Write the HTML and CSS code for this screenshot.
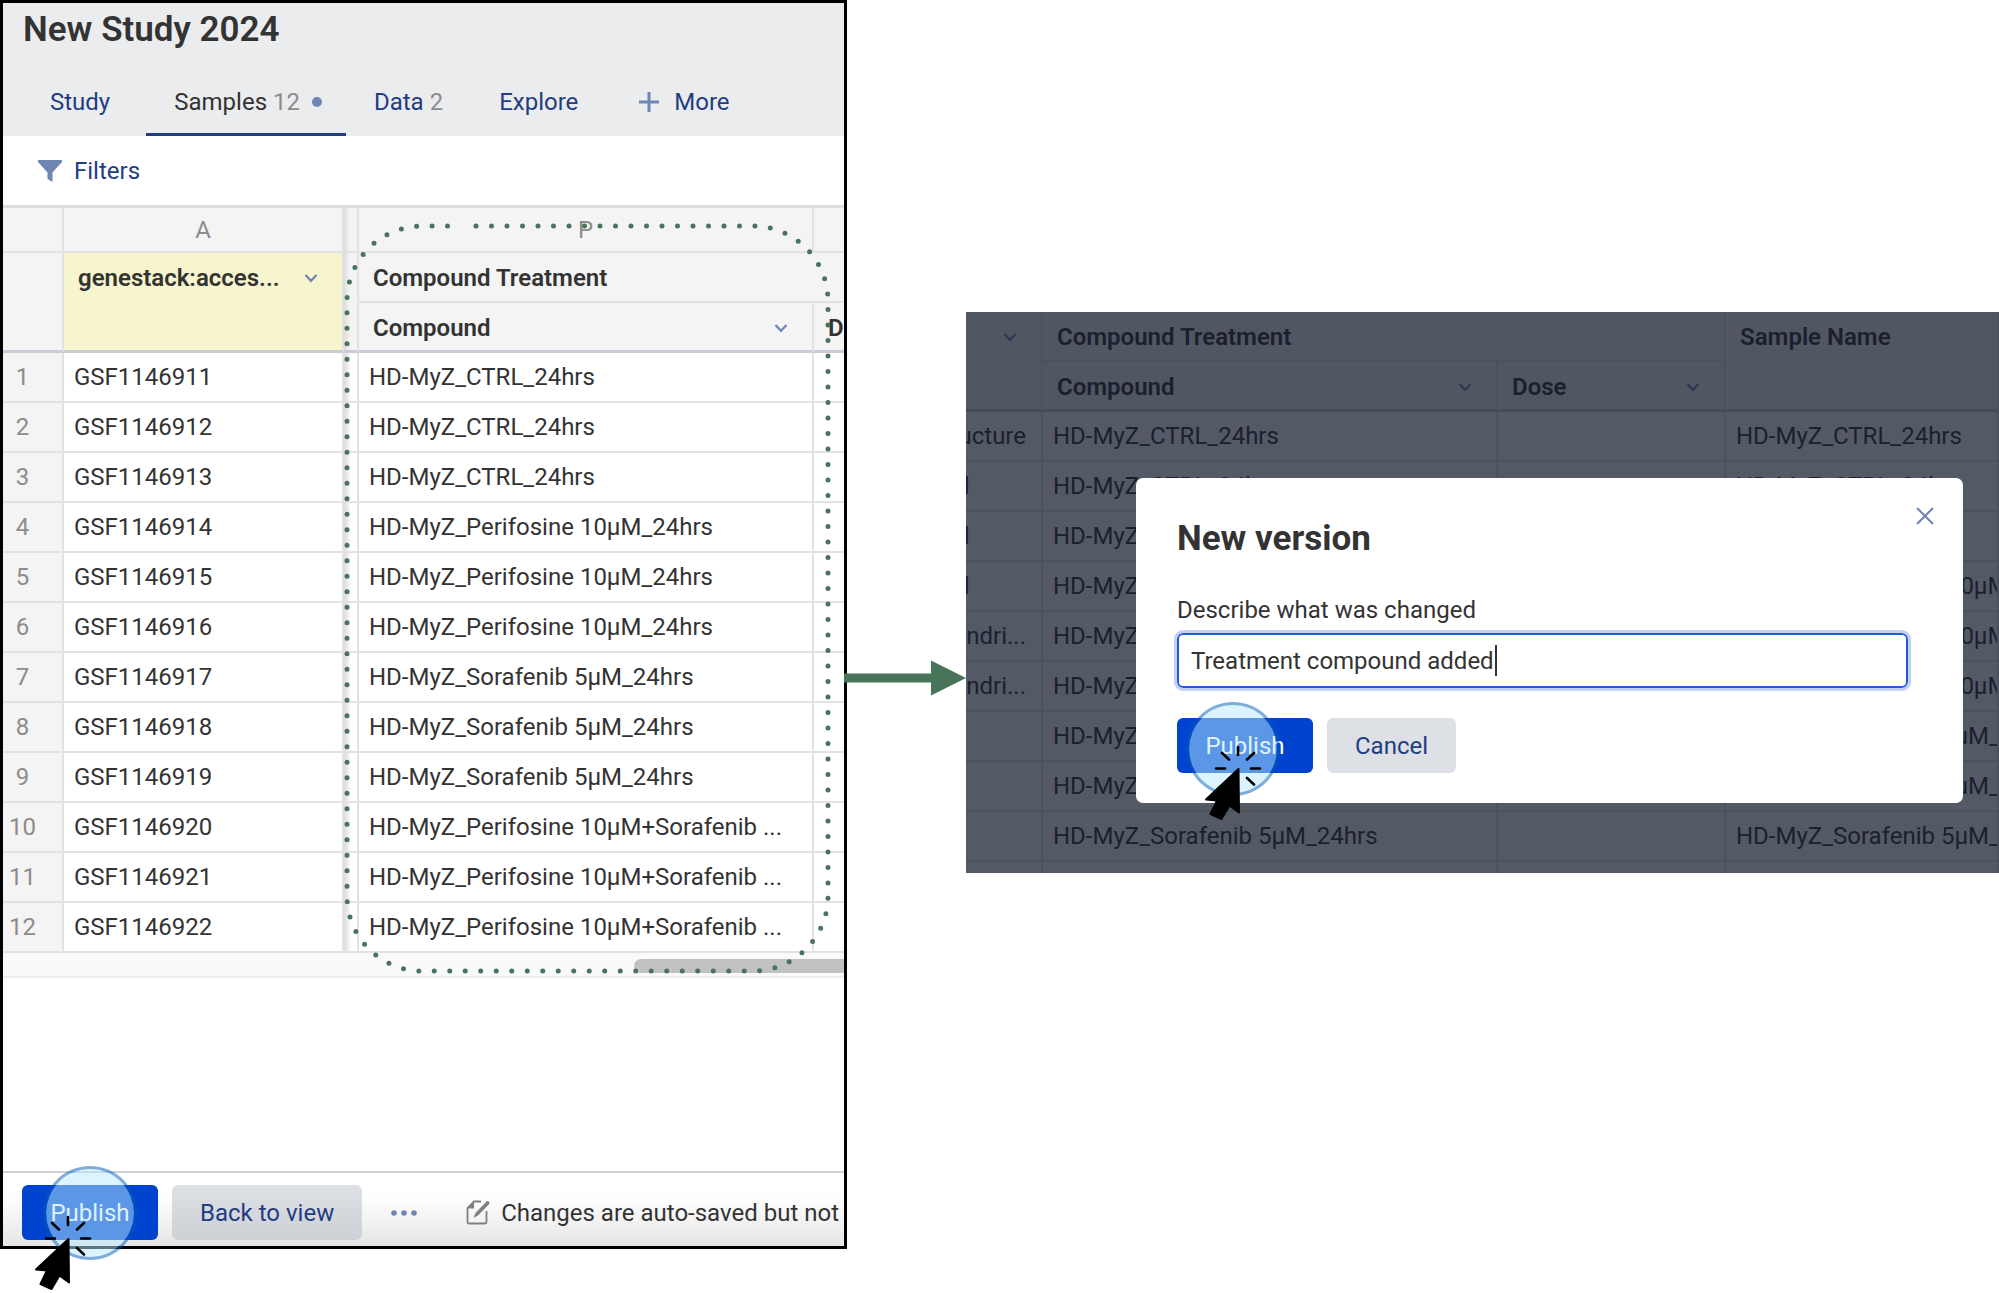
FILE: index.html
```
<!DOCTYPE html>
<html lang="en">

<head>
    <meta charset="UTF-8">
    <meta name="viewport" content="width=device-width, initial-scale=1.0">
    <title>New Study 2024</title>
    <link rel="stylesheet" href="styles.css">
</head>

<body>
    <svg class="defs" aria-hidden="true">
        <symbol id="chevron" viewBox="0 0 14 10">
            <path d="M1.5 2 L7 7.8 L12.500 2" fill="none" stroke="currentColor" stroke-width="2.200" />
        </symbol>
        <symbol id="pointer" viewBox="0 0 64 80">
            <g stroke="#000" stroke-width="2.600" stroke-linecap="round">
                <path d="M36 3 V11 M20 9 L27 15.500 M52 9 L45 15.500 M14 24.500 H23 M49 24.500 H58 M45 34 L52 40.500" />
            </g>
            <path d="M36.500 25 L37 68.500 L27.500 61.500 L19.500 75 L8.500 70 L15 56.500 L4 55.500 Z" stroke="#000" stroke-width="2" stroke-linejoin="round" />
        </symbol>
    </svg>

    <main class="wrapper">
        <section class="study">
            <header class="study-header">
                <h1>New Study 2024</h1>
                <nav class="tabs">
                    <a href="#">Study</a>
                    <a href="#" class="active">Samples <span class="count">12</span><i class="dot"></i></a>
                    <a href="#">Data <span class="count">2</span></a>
                    <a href="#">Explore</a>
                    <a href="#"><svg class="plus" viewBox="0 0 20 20"><path d="M10 0 V20 M0 10 H20" stroke="#6f86b5" stroke-width="3" /></svg>More</a>
                </nav>
            </header>

            <div class="toolbar">
                <button type="button" class="filters">
                    <svg viewBox="0 0 24 22"><path d="M0 0 H24 V2 L14.500 12.500 V22 L9.500 19 V12.500 L0 2 Z" fill="#6f86b5" /></svg>
                    Filters
                </button>
            </div>

            <div class="sheet">
                <div class="clip">
                    <table class="grid samples">
                        <colgroup>
                            <col class="c-num">
                            <col class="c-acc">
                            <col class="c-gap">
                            <col class="c-comp">
                            <col class="c-dose">
                        </colgroup>
                        <thead>
                            <tr class="letters">
                                <th></th>
                                <th>A</th>
                                <th class="gap"></th>
                                <th>P</th>
                                <th></th>
                            </tr>
                            <tr>
                                <th rowspan="2" class="last"></th>
                                <th rowspan="2" class="last key">
                                    <div class="head">genestack:acces... <button type="button" aria-label="Accession menu"><svg><use href="#chevron" /></svg></button></div>
                                </th>
                                <th rowspan="2" class="last gap"></th>
                                <th colspan="2"><div class="head">Compound Treatment</div></th>
                            </tr>
                            <tr>
                                <th class="last"><div class="head">Compound <button type="button" aria-label="Compound menu"><svg><use href="#chevron" /></svg></button></div></th>
                                <th class="last"><div class="head">Dose</div></th>
                            </tr>
                        </thead>
                        <tbody>
                            <tr><th>1</th><td>GSF1146911</td><td class="gap"></td><td>HD-MyZ_CTRL_24hrs</td><td></td></tr>
                            <tr><th>2</th><td>GSF1146912</td><td class="gap"></td><td>HD-MyZ_CTRL_24hrs</td><td></td></tr>
                            <tr><th>3</th><td>GSF1146913</td><td class="gap"></td><td>HD-MyZ_CTRL_24hrs</td><td></td></tr>
                            <tr><th>4</th><td>GSF1146914</td><td class="gap"></td><td>HD-MyZ_Perifosine 10µM_24hrs</td><td></td></tr>
                            <tr><th>5</th><td>GSF1146915</td><td class="gap"></td><td>HD-MyZ_Perifosine 10µM_24hrs</td><td></td></tr>
                            <tr><th>6</th><td>GSF1146916</td><td class="gap"></td><td>HD-MyZ_Perifosine 10µM_24hrs</td><td></td></tr>
                            <tr><th>7</th><td>GSF1146917</td><td class="gap"></td><td>HD-MyZ_Sorafenib 5µM_24hrs</td><td></td></tr>
                            <tr><th>8</th><td>GSF1146918</td><td class="gap"></td><td>HD-MyZ_Sorafenib 5µM_24hrs</td><td></td></tr>
                            <tr><th>9</th><td>GSF1146919</td><td class="gap"></td><td>HD-MyZ_Sorafenib 5µM_24hrs</td><td></td></tr>
                            <tr><th>10</th><td>GSF1146920</td><td class="gap"></td><td>HD-MyZ_Perifosine 10µM+Sorafenib ...</td><td></td></tr>
                            <tr><th>11</th><td>GSF1146921</td><td class="gap"></td><td>HD-MyZ_Perifosine 10µM+Sorafenib ...</td><td></td></tr>
                            <tr><th>12</th><td>GSF1146922</td><td class="gap"></td><td>HD-MyZ_Perifosine 10µM+Sorafenib ...</td><td></td></tr>
                        </tbody>
                    </table>
                    <div class="scrollbar"><div class="thumb"></div></div>
                </div>
                <!-- dotted outline round the compound column -->
                <svg class="outline" viewBox="0 0 490 754">
                    <path d="M133 4 H410 A75 75 0 0 1 485 79 V674 A75 75 0 0 1 410 749 H79 A75 75 0 0 1 4 674 V79 A75 75 0 0 1 79 4 H109" />
                </svg>
            </div>

            <footer class="actions">
                <div class="click click-page">
                    <button type="button" class="btn primary">Publish</button>
                    <span class="halo"></span>
                    <svg class="pointer"><use href="#pointer" /></svg>
                </div>
                <button type="button" class="btn">Back to view</button>
                <button type="button" class="more" aria-label="More actions">
                    <svg viewBox="0 0 26 6" fill="#6f86b5"><circle cx="3" cy="3" r="2.800" /><circle cx="13" cy="3" r="2.800" /><circle cx="23" cy="3" r="2.800" /></svg>
                </button>
                <svg class="note" viewBox="0 0 24 25">
                    <path d="M15 1.500 H8 L1.500 8 V21.500 Q1.500 23.500 3.500 23.500 H18.500 Q20.500 23.500 20.500 21.500 V11" fill="none" stroke="#808080" stroke-width="1.800" />
                    <path d="M8 1 V8.500 H1 Z M20.500 1.500 Q22 0.500 23.200 2 Q24 3.300 23 4.300 L12 15.500 L7.500 18 L9.500 13 Z" fill="#808080" />
                </svg>
                <p>Changes are auto-saved but not published</p>
            </footer>
        </section>

        <svg class="arrow" viewBox="0 0 124 36" preserveAspectRatio="xMaxYMid meet">
            <path d="M0 13.500 H89 V0.500 L124 18 L89 35.500 V22.500 H0 Z" fill="#48745a" />
        </svg>

        <section class="preview">
            <table class="grid">
                <colgroup>
                    <col class="c-cut">
                    <col class="c-comp">
                    <col class="c-dose">
                    <col>
                </colgroup>
                <thead>
                    <tr>
                        <th rowspan="2" class="last"><div class="head"><span></span><button type="button" aria-label="Column menu"><svg><use href="#chevron" /></svg></button></div></th>
                        <th colspan="2"><div class="head">Compound Treatment</div></th>
                        <th rowspan="2" class="last"><div class="head">Sample Name</div></th>
                    </tr>
                    <tr>
                        <th class="last"><div class="head">Compound <button type="button" aria-label="Compound menu"><svg><use href="#chevron" /></svg></button></div></th>
                        <th class="last"><div class="head">Dose <button type="button" aria-label="Dose menu"><svg><use href="#chevron" /></svg></button></div></th>
                    </tr>
                </thead>
                <tbody>
                    <tr><td class="tail"><span>ucture</span></td><td>HD-MyZ_CTRL_24hrs</td><td></td><td>HD-MyZ_CTRL_24hrs</td></tr>
                    <tr><td class="edge">d</td><td>HD-MyZ_CTRL_24hrs</td><td></td><td>HD-MyZ_CTRL_24hrs</td></tr>
                    <tr><td class="edge">d</td><td>HD-MyZ_CTRL_24hrs</td><td></td><td>HD-MyZ_CTRL_24hrs</td></tr>
                    <tr><td class="edge">d</td><td>HD-MyZ_Perifosine 10µM_24hrs</td><td></td><td>HD-MyZ_Perifosine 10µM_24hrs</td></tr>
                    <tr><td class="tail"><span>ndri...</span></td><td>HD-MyZ_Perifosine 10µM_24hrs</td><td></td><td>HD-MyZ_Perifosine 10µM_24hrs</td></tr>
                    <tr><td class="tail"><span>ndri...</span></td><td>HD-MyZ_Perifosine 10µM_24hrs</td><td></td><td>HD-MyZ_Perifosine 10µM_24hrs</td></tr>
                    <tr><td></td><td>HD-MyZ_Sorafenib 5µM_24hrs</td><td></td><td>HD-MyZ_Sorafenib 5µM_24hrs</td></tr>
                    <tr><td></td><td>HD-MyZ_Sorafenib 5µM_24hrs</td><td></td><td>HD-MyZ_Sorafenib 5µM_24hrs</td></tr>
                    <tr><td></td><td>HD-MyZ_Sorafenib 5µM_24hrs</td><td></td><td>HD-MyZ_Sorafenib 5µM_24hrs</td></tr>
                    <tr><td></td><td></td><td></td><td></td></tr>
                </tbody>
            </table>

            <div class="overlay">
                <form class="modal" action="#" method="POST">
                    <button type="button" class="close" aria-label="Close">
                        <svg viewBox="0 0 18 18"><path d="M1 1 L17 17 M17 1 L1 17" stroke="#7388b8" stroke-width="2.200" /></svg>
                    </button>
                    <h2>New version</h2>
                    <label for="description">Describe what was changed</label>
                    <div class="field">
                        <input type="text" name="description" id="description" value="Treatment compound added">
                        <span class="caret"></span>
                    </div>
                    <div class="buttons">
                        <div class="click click-modal">
                            <button type="submit" class="btn primary">Publish</button>
                            <span class="halo"></span>
                            <svg class="pointer"><use href="#pointer" /></svg>
                        </div>
                        <button type="button" class="btn">Cancel</button>
                    </div>
                </form>
            </div>
        </section>
    </main>
</body>

</html>
```
FILE: styles.css
```
* {
    margin: 0;
    padding: 0;
    box-sizing: border-box;
}

body {
    min-height: 100vh;
    background: #fff;
    color: #333;
    font-family: Roboto, "Liberation Sans", Arial, sans-serif;
    font-size: 24px;
    line-height: 32px;
}

button,
input {
    font: inherit;
    color: inherit;
    border: 0;
    background: none;
}

button {
    cursor: pointer;
}

a {
    color: #1f3d83;
    text-decoration: none;
}

svg {
    display: block;
    flex: none;
}

.defs {
    position: absolute;
    width: 0;
    height: 0;
}

.wrapper {
    display: grid;
    grid-template-columns: 847fr 119fr 1033fr;
    align-items: start;
    min-height: 100vh;
}

/* study page */

.study {
    min-width: 0;
    border: 3px solid #000;
}

.study-header {
    background: #ebecee;
}

h1 {
    padding-left: 20px;
    font-size: 35px;
    line-height: 54px;
    font-weight: 600;
}

.tabs {
    display: flex;
    padding: 9px 0 0 19px;
    overflow: hidden;
}

.tabs a {
    display: flex;
    align-items: center;
    height: 70px;
    padding: 2px 28px 0;
    white-space: pre;
}

.tabs a.active {
    margin-left: 8px;
    padding-right: 24px;
    color: #333;
    box-shadow: inset 0 -3px #1f3d83;
}

.count {
    color: #8c8c8c;
}

.dot {
    width: 10px;
    height: 10px;
    margin-left: 12px;
    border-radius: 50%;
    background: #6f86b5;
}

.plus {
    width: 20px;
    height: 20px;
    margin: 0 15px 0 5px;
}

.toolbar {
    display: flex;
    align-items: center;
    height: 69px;
    padding-left: 35px;
}

.filters {
    display: flex;
    align-items: center;
    gap: 12px;
    color: #1f3d83;
}

.filters svg {
    width: 24px;
    height: 22px;
}

.sheet {
    position: relative;
}

.clip {
    overflow: hidden;
    border-top: 3px solid #ddd;
}

.grid {
    width: 100%;
    table-layout: fixed;
    border-spacing: 0;
    background: #fff;
}

.samples {
    width: 1039px;
}

.c-num {
    width: 61px;
}

.c-acc {
    width: 280px;
}

.c-gap {
    width: 15px;
}

.c-comp {
    width: 455px;
}

.c-dose {
    width: 228px;
}

.c-cut {
    width: 77px;
}

.grid th,
.grid td {
    height: 50px;
    border-right: 2px solid #e2e2e2;
    border-bottom: 2px solid #e2e2e2;
    overflow: hidden;
    white-space: nowrap;
    text-align: left;
}

.grid td {
    padding-left: 10px;
}

.grid th {
    background: #f4f4f4;
    font-weight: 600;
    vertical-align: top;
}

.grid .letters th {
    height: 45px;
    vertical-align: middle;
    text-align: center;
    font-weight: 400;
    color: #8c8c8c;
}

.grid tbody th {
    padding-right: 20px;
    vertical-align: middle;
    text-align: center;
    font-weight: 400;
    color: #8c8c8c;
}

.grid .last {
    border-bottom: 3px solid #c9ccd4;
}

.grid .key {
    background: #f7f5cd;
}

.grid .gap {
    padding: 0;
    background-image: linear-gradient(to right, #dcdcdc, #eee 4px, transparent 7px);
}

.head {
    display: flex;
    align-items: center;
    justify-content: space-between;
    height: 47px;
    padding: 2px 24px 0 14px;
}

.head button {
    color: #6f86b5;
}

.head svg {
    width: 14px;
    height: 10px;
}

.scrollbar {
    height: 25px;
    padding: 6px 0 0 75%;
    background: #fafafa;
    border-bottom: 2px solid #ececec;
}

.thumb {
    height: 14px;
    border-radius: 7px 0 0 7px;
    background: #c1c1c1;
}

.outline {
    position: absolute;
    top: 17px;
    left: 340px;
    width: 490px;
    height: 754px;
    fill: none;
    stroke: #48745a;
    stroke-width: 5;
    stroke-linecap: round;
    stroke-dasharray: 0 15.5;
    pointer-events: none;
}

.actions {
    display: flex;
    align-items: center;
    height: 75px;
    margin-top: 193px;
    padding: 6px 0 0 19px;
    border-top: 2px solid #d0d1d8;
    background: linear-gradient(#fff 30%, #e6e6e6);
}

.btn {
    height: 55px;
    padding: 0 28px;
    border-radius: 6px;
    background: #dde0e5;
    color: #1f3d83;
    white-space: nowrap;
}

.btn.primary {
    background: #0043ce;
    color: #fff;
}

.actions .btn:not(.primary) {
    background: linear-gradient(#dde0e5, #cdd0d4);
}

.more {
    margin: 0 49px 0 29px;
}

.more svg {
    width: 26px;
    height: 6px;
}

.note {
    width: 24px;
    height: 25px;
    margin-right: 11px;
}

.actions p {
    flex: 1;
    overflow: hidden;
    white-space: nowrap;
}

/* click marker over a button */

.click {
    position: relative;
    margin-right: 14px;
}

.click .btn {
    width: 136px;
}

.halo {
    position: absolute;
    width: 94px;
    height: 94px;
    border: 3px solid rgba(0, 91, 181, 0.5);
    border-radius: 50%;
    background: rgba(184, 233, 255, 0.5);
    background-clip: padding-box;
    pointer-events: none;
}

.pointer {
    position: absolute;
    width: 64px;
    height: 80px;
    pointer-events: none;
}

.click-page .halo {
    top: -19px;
    left: 21px;
}

.click-page .pointer {
    top: 29px;
    left: 10px;
}

.click-modal .halo {
    top: -16px;
    left: 9px;
}

.click-modal .pointer {
    top: 26px;
    left: 25px;
}

.arrow {
    width: calc(100% + 5px);
    height: 36px;
    margin: 660px 0 0 -5px;
}

/* dialog over the dimmed table */

.preview {
    position: relative;
    min-width: 0;
    max-height: 561px;
    margin-top: 312px;
    overflow: hidden;
}

.grid .tail {
    padding: 0 15px 0 0;
}

.tail span {
    display: flex;
    justify-content: flex-end;
}

.grid .edge {
    padding: 0;
    text-indent: -10px;
}

.overlay {
    position: absolute;
    inset: 0;
    padding: 166px 36px 0 170px;
    background: rgba(18, 25, 43, 0.72);
}

.modal {
    position: relative;
    padding: 37px 55px 30px 41px;
    border-radius: 7px;
    background: #fff;
}

.close {
    position: absolute;
    top: 29px;
    right: 29px;
}

.close svg {
    width: 18px;
    height: 18px;
}

h2 {
    font-size: 35px;
    line-height: 48px;
    font-weight: 700;
}

label {
    display: block;
    margin-top: 31px;
}

.field {
    position: relative;
    margin-top: 7px;
}

.field input {
    display: block;
    width: 100%;
    height: 55px;
    padding: 0 12px;
    border: 2px solid #1f5bdb;
    border-radius: 6px;
    outline: 3px solid #c5d0f6;
}

.caret {
    position: absolute;
    top: 12px;
    left: 318px;
    width: 2px;
    height: 31px;
    background: #333;
}

.buttons {
    display: flex;
    margin-top: 30px;
}
```
